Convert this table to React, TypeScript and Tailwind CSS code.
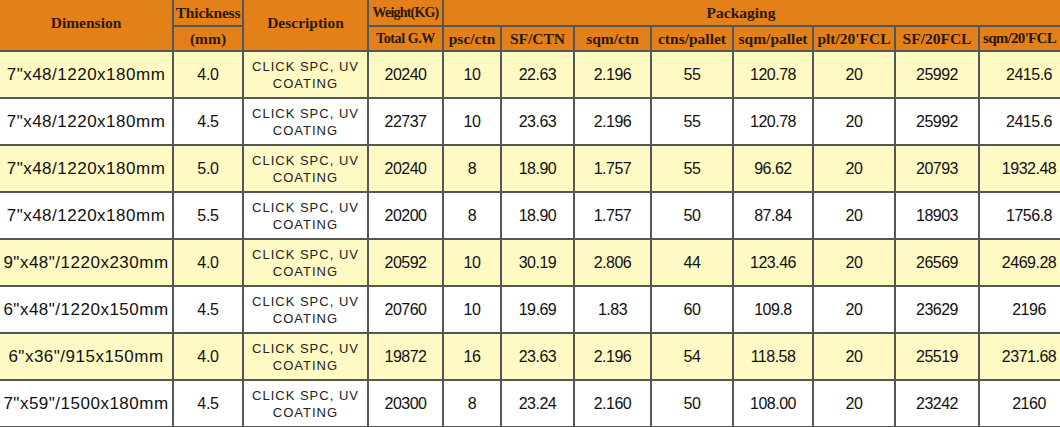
import React from 'react';

const rows = [
  ['7"x48/1220x180mm', '4.0', '20240', '10', '22.63', '2.196', '55', '120.78', '20', '25992', '2415.6'],
  ['7"x48/1220x180mm', '4.5', '22737', '10', '23.63', '2.196', '55', '120.78', '20', '25992', '2415.6'],
  ['7"x48/1220x180mm', '5.0', '20240', '8', '18.90', '1.757', '55', '96.62', '20', '20793', '1932.48'],
  ['7"x48/1220x180mm', '5.5', '20200', '8', '18.90', '1.757', '50', '87.84', '20', '18903', '1756.8'],
  ['9"x48"/1220x230mm', '4.0', '20592', '10', '30.19', '2.806', '44', '123.46', '20', '26569', '2469.28'],
  ['6"x48"/1220x150mm', '4.5', '20760', '10', '19.69', '1.83', '60', '109.8', '20', '23629', '2196'],
  ['6"x36"/915x150mm', '4.0', '19872', '16', '23.63', '2.196', '54', '118.58', '20', '25519', '2371.68'],
  ['7"x59"/1500x180mm', '4.5', '20300', '8', '23.24', '2.160', '50', '108.00', '20', '23242', '2160'],
];

const widths = [173, 70, 125, 75, 58, 73, 77, 82, 80, 82, 84, 100];
const subHeads = ['psc/ctn', 'SF/CTN', 'sqm/ctn', 'ctns/pallet', 'sqm/pallet', "plt/20'FCL", 'SF/20FCL'];

const head = 'border-r-2 border-b-2 border-[#565656] bg-[#e3801a] text-[#2a1a0a] font-bold text-center align-middle whitespace-nowrap p-0';
const cell = 'border-r-2 border-b-2 border-[#565656] text-center align-middle whitespace-nowrap p-0 text-[#111]';

const App: React.FC = () => {
  return (
    <div className="w-[1060px] h-[427px] overflow-hidden bg-white">
      <table className="table-fixed border-collapse w-[1079px]">
        <colgroup>
          {widths.map((w, i) => (
            <col key={i} style={{ width: w }} />
          ))}
        </colgroup>
        <thead className="font-['Liberation_Serif',serif] text-[15.5px]">
          <tr className="h-[26px]">
            <th rowSpan={2} className={`${head} pb-[6px]`}>Dimension</th>
            <th className={`${head} tracking-[-0.2px]`}>Thickness</th>
            <th rowSpan={2} className={`${head} pb-[6px]`}>Description</th>
            <th className={`${head} text-[14px] tracking-[-0.8px]`}>Weight(KG)</th>
            <th colSpan={8} className={`${head} border-r-0 pr-[40px]`}>Packaging</th>
          </tr>
          <tr className="h-[25px]">
            <th className={head}>(mm)</th>
            <th className={`${head} text-[14px] tracking-[-0.4px]`}>Total G.W</th>
            {subHeads.map((h) => (
              <th key={h} className={head}>
                {h}
              </th>
            ))}
            <th className={`${head} border-r-0 text-left pl-[3px] text-[15px] tracking-[-0.7px]`}>sqm/20'FCL</th>
          </tr>
        </thead>
        <tbody className="font-['Liberation_Sans',Arial,sans-serif]">
          {rows.map((r, ri) => (
            <tr key={ri} className={`h-[47px] ${ri % 2 === 0 ? 'bg-[#fff9c4]' : 'bg-white'}`}>
              <td className={`${cell} text-[17px] tracking-[0.5px]`}>{r[0]}</td>
              <td className={`${cell} text-[16px] tracking-[-0.3px]`}>{r[1]}</td>
              <td className={`${cell} text-[13px] tracking-[1px] leading-[17px] text-[#222]`}>
                CLICK SPC, UV
                <br />
                COATING
              </td>
              {r.slice(2).map((v, ci) => (
                <td
                  key={ci}
                  className={`${cell} text-[16px] tracking-[-0.5px] ${ci === r.length - 3 ? 'border-r-0' : ''}`}
                >
                  {v}
                </td>
              ))}
            </tr>
          ))}
        </tbody>
      </table>
    </div>
  );
};

export default App;
